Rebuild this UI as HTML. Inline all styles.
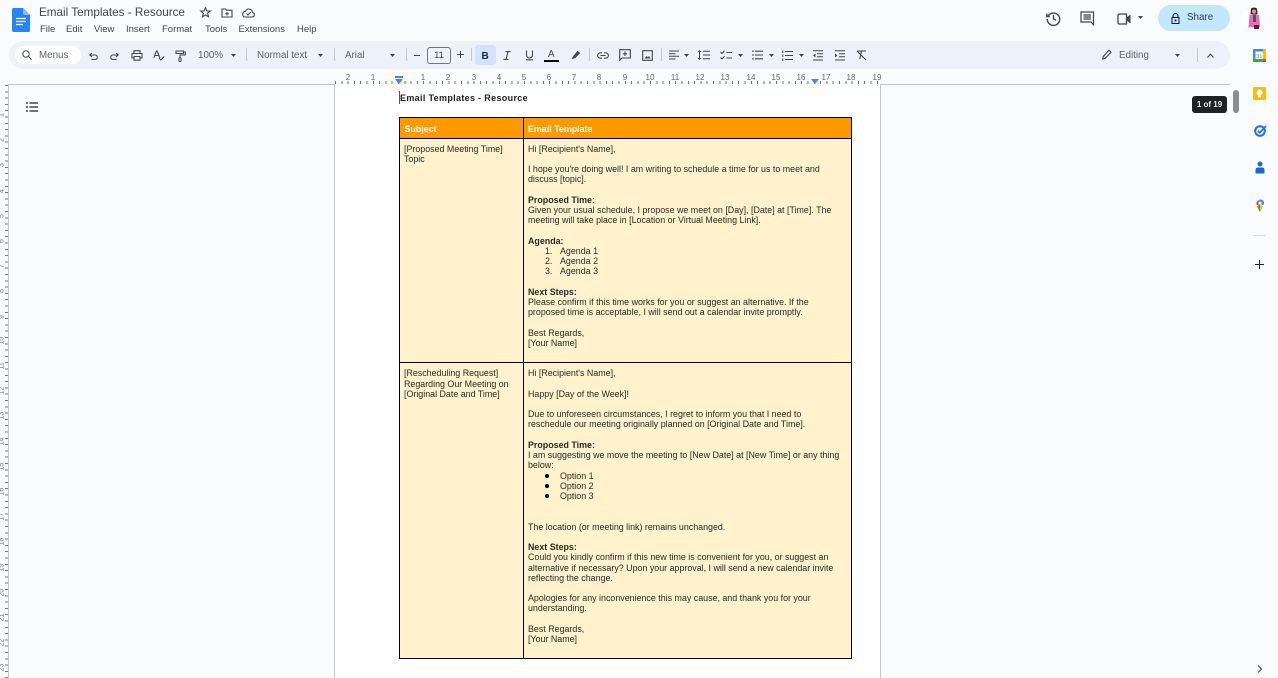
<!DOCTYPE html>
<html><head><meta charset="utf-8"><title>Email Templates - Resource</title>
<style>
html,body{margin:0;padding:0;width:1278px;height:678px;overflow:hidden;background:#f9fbfd;font-family:"Liberation Sans",sans-serif;}
.a{position:absolute;white-space:nowrap;}
.m{position:absolute;top:24px;font-size:9.5px;line-height:12px;color:#444746;white-space:nowrap;}
.t{position:absolute;font-size:9.8px;line-height:12px;color:#5f6368;white-space:nowrap;top:50px;}
.l{position:absolute;font-size:8.9px;line-height:12px;color:#2a2a2a;white-space:nowrap;}
.b{font-weight:bold;}
.r{position:absolute;top:73px;font-size:8px;line-height:10px;color:#666;width:14px;text-align:center;}
.v{position:absolute;left:0;width:5px;font-size:7px;line-height:8px;color:#777;transform:rotate(-90deg);text-align:center;}
svg{position:absolute;overflow:visible;}
.ic{fill:none;stroke:#444746;stroke-width:1.1;}
</style></head><body>

<!-- Header -->
<svg style="left:12px;top:8px" width="18" height="24" viewBox="0 0 18 24"><path d="M1.5 0H11L18 7V22.500Q18 24 16.500 24H1.500Q0 24 0 22.500V1.500Q0 0 1.500 0Z" fill="#2684fc"/><path d="M11 0L18 7H12.500Q11 7 11 5.500Z" fill="#8ab8f8"/><path d="M4 10.500H14M4 13.500H14M4 16.500H11" stroke="#fff" stroke-width="1.300"/></svg>
<div class="a" style="left:39px;top:5px;font-size:11.700px;line-height:16px;color:#444746">Email Templates - Resource</div>
<svg style="left:200px;top:7px" width="11" height="11" viewBox="0 0 11 11"><path class="ic" d="M5.500 .8L6.900 4H10.300L7.600 6.200L8.500 9.800L5.500 7.900L2.500 9.800L3.400 6.200L.7 4H4.100Z"/></svg>
<svg style="left:221px;top:8px" width="12" height="10" viewBox="0 0 12 10"><path class="ic" d="M1 1H4.500L5.500 2.200H11V9H1ZM6 4V7.500M4.300 5.700H7.800"/></svg>
<svg style="left:242px;top:8px" width="13" height="10" viewBox="0 0 13 10"><path class="ic" d="M3.500 9H10Q12.300 9 12.300 6.800Q12.300 5 10.500 4.500Q10 1 6.800 1Q4.300 1 3.400 3.300Q.7 3.700 .7 6.200Q.7 9 3.500 9ZM4.500 5.500L6 7L8.800 4"/></svg>
<div class="m" style="left:40px">File</div>
<div class="m" style="left:66px">Edit</div>
<div class="m" style="left:94px">View</div>
<div class="m" style="left:126px">Insert</div>
<div class="m" style="left:162px">Format</div>
<div class="m" style="left:205px">Tools</div>
<div class="m" style="left:238.500px">Extensions</div>
<div class="m" style="left:297px">Help</div>

<svg style="left:1046px;top:11px" width="15" height="15" viewBox="0 0 15 15"><path d="M2.200 5A6.200 6.200 0 1 1 1.300 8M.8 2.500V5.500H3.800M7.500 4V7.800L10.200 9.300" fill="none" stroke="#444746" stroke-width="1.400"/></svg>
<svg style="left:1080px;top:11px" width="15" height="15" viewBox="0 0 15 15"><path d="M1 1H13.500V13.800L11 11H1ZM3.500 4H11M3.500 6H11M3.500 8H11" fill="none" stroke="#444746" stroke-width="1.200"/></svg>
<svg style="left:1117px;top:13px" width="14" height="12" viewBox="0 0 14 12"><path d="M2.500 1H9.500V11H2.500Q1 11 1 9.500V2.500Q1 1 2.500 1Z" fill="none" stroke="#444746" stroke-width="1.300"/><path d="M9.500 4.500L13.500 1.500V10.500L9.500 7.500Z" fill="#444746"/></svg>
<svg style="left:1138px;top:16px" width="5" height="3"><path d="M0 0H5L2.500 3Z" fill="#444746"/></svg>
<div class="a" style="left:1158px;top:5px;width:72px;height:26px;border-radius:13px;background:#c2e7ff"></div>
<svg style="left:1171px;top:13px" width="9" height="11" viewBox="0 0 9 11"><path d="M2 4.500V3A2.500 2.500 0 0 1 7 3V4.500" fill="none" stroke="#001d35" stroke-width="1.100"/><path fill-rule="evenodd" d="M.5 4H8.500V11H.5ZM1.500 5V10H7.500V5Z" fill="#001d35"/><circle cx="4.500" cy="7.500" r="1" fill="#001d35"/></svg>
<div class="a" style="left:1187px;top:12px;font-size:9.800px;line-height:12px;color:#33414d">Share</div>
<svg style="left:1243px;top:7px" width="22" height="22" viewBox="0 0 22 22"><circle cx="11" cy="11" r="11" fill="#fff"/><path d="M8 1.500Q11 -.5 14 1.500L14.500 7H7.500Z" fill="#3a2020"/><circle cx="11" cy="4.500" r="2" fill="#d8a080"/><path d="M6.500 8L10 6.800H12.500L16 8L17 20H5.500Z" fill="#ee69b0"/><path d="M10 7.500H13V15H10Z" fill="#3a5a70"/><path d="M11 18H16V22H11Z" fill="#3b2a30"/></svg>

<!-- Toolbar -->
<div class="a" style="left:9px;top:41px;width:1221px;height:28px;border-radius:14px;background:#edf2fa"></div>
<div class="a" style="left:15px;top:46px;width:66px;height:18px;border-radius:9px;background:#fff"></div>
<svg style="left:22px;top:50px" width="10" height="10" viewBox="0 0 10 10"><circle cx="4" cy="4" r="3.200" fill="none" stroke="#444746" stroke-width="1"/><path d="M6.500 6.500L9.600 9.600" stroke="#444746" stroke-width="1.100"/></svg>
<div class="t" style="left:39px">Menus</div>
<svg style="left:89px;top:52px" width="9" height="8" viewBox="0 0 9 8"><path class="ic" d="M3 1L.8 3L3 5M1 3H6Q8.300 3 8.300 5.200Q8.300 7.400 6 7.400H2.500"/></svg>
<svg style="left:110px;top:52px" width="9" height="8" viewBox="0 0 9 8"><path class="ic" d="M6 1L8.200 3L6 5M8 3H3Q.7 3 .7 5.200Q.7 7.400 3 7.400H6.500"/></svg>
<svg style="left:131px;top:50px" width="12" height="11" viewBox="0 0 12 11"><path class="ic" d="M3 3V.7H9V3M3 8H1V3.500H11V8H9M3 6.500H9V10.200H3Z"/></svg>
<svg style="left:153px;top:50px" width="12" height="11" viewBox="0 0 12 11"><path class="ic" d="M.8 7.800L3.500 1H4.200L6.800 7.800M1.800 5.500H5.800M6 8L7.800 10L11.200 6.500"/></svg>
<svg style="left:175px;top:50px" width="11" height="12" viewBox="0 0 11 12"><path class="ic" d="M1 1H8.500V3.500H1ZM8.500 2H10.300V5H5V8"/><rect x="4" y="7.800" width="2" height="3.800" rx=".6" fill="none" stroke="#444746" stroke-width="1"/></svg>
<div class="t" style="left:198px">100%</div>
<svg style="left:231px;top:54px" width="5" height="3"><path d="M0 0H5L2.500 3Z" fill="#444746"/></svg>
<div class="a" style="left:246px;top:48px;width:1px;height:13px;background:#c7c7c7"></div>
<div class="t" style="left:257px">Normal text</div>
<svg style="left:318px;top:54px" width="5" height="3"><path d="M0 0H5L2.500 3Z" fill="#444746"/></svg>
<div class="a" style="left:334px;top:48px;width:1px;height:13px;background:#c7c7c7"></div>
<div class="t" style="left:345px">Arial</div>
<svg style="left:390px;top:54px" width="5" height="3"><path d="M0 0H5L2.500 3Z" fill="#444746"/></svg>
<div class="a" style="left:406px;top:48px;width:1px;height:13px;background:#c7c7c7"></div>
<div class="a" style="left:414px;top:55px;width:6px;height:1px;background:#444746"></div>
<div class="a" style="left:427px;top:47px;width:22px;height:15px;border:1px solid #747775;border-radius:3px;text-align:center;font-size:9.500px;line-height:15px;color:#444746">11</div>
<svg style="left:457px;top:51px" width="7" height="7"><path d="M3.500 0V7M0 3.500H7" stroke="#444746" stroke-width="1"/></svg>
<div class="a" style="left:471px;top:48px;width:1px;height:13px;background:#c7c7c7"></div>
<div class="a" style="left:475px;top:45px;width:21px;height:20px;border-radius:3px;background:#d3e3fd"></div>
<div class="a" style="left:481.500px;top:50px;font-size:10px;line-height:13px;font-weight:bold;color:#0b2a55">B</div>
<svg style="left:503px;top:51px" width="8" height="9" viewBox="0 0 8 9"><path d="M2.500 .6H7.500M.5 8.400H5.500M5 .6L3 8.400" fill="none" stroke="#444746" stroke-width="1.100"/></svg>
<svg style="left:525px;top:50px" width="9" height="11" viewBox="0 0 9 11"><path d="M1.500 .5V5A3 3 0 0 0 7.500 5V.5M.8 9.800H8.200" fill="none" stroke="#444746" stroke-width="1.100"/></svg>
<div class="a" style="left:548px;top:49px;font-size:9.800px;line-height:12px;color:#444746">A</div>
<div class="a" style="left:544px;top:60px;width:15px;height:2px;background:#000"></div>
<svg style="left:570px;top:50px" width="11" height="10" viewBox="0 0 11 10"><path d="M1.500 9L3 6.500L7.500 .8L10.200 3L5.500 8L3.200 8.800Z" fill="#444746"/></svg>
<div class="a" style="left:589px;top:48px;width:1px;height:13px;background:#c7c7c7"></div>
<svg style="left:597px;top:52px" width="12" height="7" viewBox="0 0 12 7"><path class="ic" d="M5 .8H3.300A2.700 2.700 0 0 0 3.300 6.200H5M7 .8H8.700A2.700 2.700 0 0 1 8.700 6.200H7M3.500 3.500H8.500"/></svg>
<svg style="left:619px;top:49px" width="12" height="12" viewBox="0 0 12 12"><path class="ic" d="M.7 .7H11.300V9H3L.7 11.300ZM6 2.500V7M3.800 4.800H8.200"/></svg>
<svg style="left:642px;top:50px" width="11" height="11" viewBox="0 0 11 11"><path class="ic" d="M.7 .7H10.300V10.300H.7Z"/><path d="M2.500 8.500L4.500 6L5.800 7.300L7 6L8.500 8.500Z" fill="#444746"/></svg>
<div class="a" style="left:661px;top:48px;width:1px;height:13px;background:#c7c7c7"></div>
<svg style="left:669px;top:50px" width="10" height="10" viewBox="0 0 10 10"><path d="M0 1H10M0 3.700H6.500M0 6.300H10M0 9H6.500" stroke="#444746" stroke-width="1"/></svg>
<svg style="left:684px;top:54px" width="5" height="3"><path d="M0 0H5L2.500 3Z" fill="#444746"/></svg>
<svg style="left:697px;top:50px" width="13" height="10" viewBox="0 0 13 10"><path d="M2.500 0L4.500 2H.5ZM2.500 10L4.500 8H.5Z" fill="#444746"/><path d="M2.500 1V9M6 1.200H13M6 5H13M6 8.800H13" stroke="#444746" stroke-width="1"/></svg>
<svg style="left:720px;top:50px" width="12" height="10" viewBox="0 0 12 10"><path class="ic" d="M.5 2L2 3.500L4.500 .7M.5 7.500L2 9L4.500 6.200M6.500 2.500H12M6.500 8H12"/></svg>
<svg style="left:738px;top:54px" width="5" height="3"><path d="M0 0H5L2.500 3Z" fill="#444746"/></svg>
<svg style="left:752px;top:50px" width="11" height="10" viewBox="0 0 11 10"><path d="M3 1.200H11M3 5H11M3 8.800H11M0 1.200H1.800M0 5H1.800M0 8.800H1.800" stroke="#444746" stroke-width="1.100"/></svg>
<svg style="left:769px;top:54px" width="5" height="3"><path d="M0 0H5L2.500 3Z" fill="#444746"/></svg>
<svg style="left:782px;top:50px" width="11" height="11" viewBox="0 0 11 11"><path d="M3 1.500H11M3 5.500H11M3 9.500H11M.8 .5V3M.8 4.500V7M.8 8.500V11" stroke="#444746" stroke-width="1"/></svg>
<svg style="left:799px;top:54px" width="5" height="3"><path d="M0 0H5L2.500 3Z" fill="#444746"/></svg>
<svg style="left:813px;top:50px" width="10" height="11" viewBox="0 0 10 11"><path d="M0 .7H10M4 3.700H10M4 6.700H10M0 10H10" stroke="#444746" stroke-width="1"/><path d="M2.500 3.500V7.500L0 5.500Z" fill="#444746"/></svg>
<svg style="left:835px;top:50px" width="10" height="11" viewBox="0 0 10 11"><path d="M0 .7H10M4 3.700H10M4 6.700H10M0 10H10" stroke="#444746" stroke-width="1"/><path d="M0 3.500V7.500L2.500 5.500Z" fill="#444746"/></svg>
<svg style="left:856px;top:50px" width="11" height="10" viewBox="0 0 11 10"><path d="M1 1H10M5.500 1L3.800 9M1 1L10 10" fill="none" stroke="#444746" stroke-width="1.100"/></svg>

<svg style="left:1102px;top:49px" width="10" height="11" viewBox="0 0 10 11"><path class="ic" d="M.8 10L1.200 7.500L7 1.200L9 3.200L3 9.500Z"/></svg>
<div class="t" style="left:1119px">Editing</div>
<svg style="left:1175px;top:54px" width="5" height="3"><path d="M0 0H5L2.500 3Z" fill="#444746"/></svg>
<div class="a" style="left:1197px;top:48px;width:1px;height:14px;background:#c7c7c7"></div>
<svg style="left:1207px;top:53px" width="7" height="5" viewBox="0 0 7 5"><path d="M.5 4.500L3.500 1.200L6.500 4.500" fill="none" stroke="#444746" stroke-width="1.100"/></svg>

<!-- Horizontal ruler -->
<div class="a" style="left:335px;top:81px;width:546px;height:3px;background:repeating-linear-gradient(90deg,#777 0,#777 1px,transparent 1px,transparent 6.300px)"></div>
<div class="a" style="left:8px;top:84px;width:1222px;height:1px;background:#c4c7c5"></div>
<div class="r" style="left:341px">2</div><div class="r" style="left:366px">1</div><div class="r" style="left:416px">1</div><div class="r" style="left:441px">2</div><div class="r" style="left:467px">3</div><div class="r" style="left:492px">4</div><div class="r" style="left:517px">5</div><div class="r" style="left:542px">6</div><div class="r" style="left:567px">7</div><div class="r" style="left:592px">8</div><div class="r" style="left:618px">9</div><div class="r" style="left:643px">10</div><div class="r" style="left:668px">11</div><div class="r" style="left:693px">12</div><div class="r" style="left:718px">13</div><div class="r" style="left:744px">14</div><div class="r" style="left:769px">15</div><div class="r" style="left:794px">16</div><div class="r" style="left:819px">17</div><div class="r" style="left:844px">18</div><div class="r" style="left:870px">19</div>
<svg style="left:395px;top:76px" width="8" height="8"><path d="M0 0H8V2H0Z" fill="#4285f4"/><path d="M0 3H8L4 8Z" fill="#4285f4"/></svg>
<svg style="left:811px;top:79px" width="8" height="5"><path d="M0 0H8L4 5Z" fill="#4285f4"/></svg>

<!-- Vertical ruler -->
<div class="a" style="left:5px;top:85px;width:3px;height:593px;background:repeating-linear-gradient(180deg,#777 0,#777 1px,transparent 1px,transparent 6.300px)"></div>
<div class="a" style="left:8px;top:85px;width:1px;height:593px;background:#c4c7c5"></div>
<div class="v" style="top:111px">1</div><div class="v" style="top:136px">2</div><div class="v" style="top:161px">3</div><div class="v" style="top:187px">4</div><div class="v" style="top:212px">5</div><div class="v" style="top:237px">6</div><div class="v" style="top:262px">7</div><div class="v" style="top:287px">8</div><div class="v" style="top:313px">9</div><div class="v" style="top:338px">10</div><div class="v" style="top:363px">11</div><div class="v" style="top:388px">12</div><div class="v" style="top:413px">13</div><div class="v" style="top:439px">14</div><div class="v" style="top:464px">15</div><div class="v" style="top:489px">16</div><div class="v" style="top:514px">17</div><div class="v" style="top:539px">18</div><div class="v" style="top:565px">19</div><div class="v" style="top:590px">20</div><div class="v" style="top:615px">21</div><div class="v" style="top:640px">22</div><div class="v" style="top:665px">23</div>

<svg style="left:26px;top:102px" width="12" height="10" viewBox="0 0 12 10"><path d="M0 1H2M3.500 1H12M0 5H2M3.500 5H12M0 9H2M3.500 9H12" stroke="#444746" stroke-width="1.400"/></svg>

<!-- Page -->
<div class="a" style="left:334px;top:84px;width:545px;height:594px;background:#fff;border-left:1px solid #c7c7c7;border-right:1px solid #c7c7c7"></div>
<div class="a" style="left:399px;top:91px;width:1px;height:13px;background:#555"></div>
<div class="l b" style="left:400px;top:92px;color:#222;font-size:9px;letter-spacing:.33px">Email Templates - Resource</div>

<!-- Table -->
<div class="a" style="left:399px;top:117px;width:451px;height:540px;background:#fff2cc;border:1px solid #000"></div>
<div class="a" style="left:400px;top:118px;width:451px;height:20px;background:#ff9900"></div>
<div class="a" style="left:400px;top:138px;width:451px;height:1px;background:#000"></div>
<div class="a" style="left:400px;top:362px;width:451px;height:1px;background:#000"></div>
<div class="a" style="left:523px;top:118px;width:1px;height:540px;background:#000"></div>

<div class="l b" style="left:404.500px;top:123px;color:#fff">Subject</div>
<div class="l b" style="left:528px;top:123px;color:#fff">Email Template</div>

<div class="l" style="left:404px;top:143px">[Proposed Meeting Time]</div>
<div class="l" style="left:404px;top:153px">Topic</div>
<div class="l" style="left:404px;top:367px">[Rescheduling Request]</div>
<div class="l" style="left:404px;top:378px">Regarding Our Meeting on</div>
<div class="l" style="left:404px;top:388px">[Original Date and Time]</div>

<div class="l" style="left:528px;top:143px">Hi [Recipient's Name],</div>
<div class="l" style="left:528px;top:163px">I hope you're doing well! I am writing to schedule a time for us to meet and</div>
<div class="l" style="left:528px;top:173px">discuss [topic].</div>
<div class="l b" style="left:528px;top:194px">Proposed Time:</div>
<div class="l" style="left:528px;top:204px">Given your usual schedule, I propose we meet on [Day], [Date] at [Time]. The</div>
<div class="l" style="left:528px;top:214px">meeting will take place in [Location or Virtual Meeting Link].</div>
<div class="l b" style="left:528px;top:235px">Agenda:</div>
<div class="l" style="left:545px;top:245px">1.</div><div class="l" style="left:560px;top:245px">Agenda 1</div>
<div class="l" style="left:545px;top:255px">2.</div><div class="l" style="left:560px;top:255px">Agenda 2</div>
<div class="l" style="left:545px;top:265px">3.</div><div class="l" style="left:560px;top:265px">Agenda 3</div>
<div class="l b" style="left:528px;top:286px">Next Steps:</div>
<div class="l" style="left:528px;top:296px">Please confirm if this time works for you or suggest an alternative. If the</div>
<div class="l" style="left:528px;top:306px">proposed time is acceptable, I will send out a calendar invite promptly.</div>
<div class="l" style="left:528px;top:327px">Best Regards,</div>
<div class="l" style="left:528px;top:337px">[Your Name]</div>

<div class="l" style="left:528px;top:367px">Hi [Recipient's Name],</div>
<div class="l" style="left:528px;top:388px">Happy [Day of the Week]!</div>
<div class="l" style="left:528px;top:408px">Due to unforeseen circumstances, I regret to inform you that I need to</div>
<div class="l" style="left:528px;top:418px">reschedule our meeting originally planned on [Original Date and Time].</div>
<div class="l b" style="left:528px;top:439px">Proposed Time:</div>
<div class="l" style="left:528px;top:449px">I am suggesting we move the meeting to [New Date] at [New Time] or any thing</div>
<div class="l" style="left:528px;top:459px">below:</div>
<div class="a" style="left:545px;top:474px;width:4px;height:4px;border-radius:2px;background:#000"></div><div class="l" style="left:560px;top:470px">Option 1</div>
<div class="a" style="left:545px;top:484px;width:4px;height:4px;border-radius:2px;background:#000"></div><div class="l" style="left:560px;top:480px">Option 2</div>
<div class="a" style="left:545px;top:494px;width:4px;height:4px;border-radius:2px;background:#000"></div><div class="l" style="left:560px;top:490px">Option 3</div>
<div class="l" style="left:528px;top:521px">The location (or meeting link) remains unchanged.</div>
<div class="l b" style="left:528px;top:541px">Next Steps:</div>
<div class="l" style="left:528px;top:551px">Could you kindly confirm if this new time is convenient for you, or suggest an</div>
<div class="l" style="left:528px;top:562px">alternative if necessary? Upon your approval, I will send a new calendar invite</div>
<div class="l" style="left:528px;top:572px">reflecting the change.</div>
<div class="l" style="left:528px;top:592px">Apologies for any inconvenience this may cause, and thank you for your</div>
<div class="l" style="left:528px;top:602px">understanding.</div>
<div class="l" style="left:528px;top:623px">Best Regards,</div>
<div class="l" style="left:528px;top:633px">[Your Name]</div>

<!-- Scroll + tooltip -->
<div class="a" style="left:1233px;top:90px;width:6px;height:23px;border-radius:3px;background:#8a8e93"></div>
<div class="a" style="left:1192px;top:96px;width:35px;height:17px;border-radius:3px;background:#202124;color:#e8eaed;font-size:8px;font-weight:bold;line-height:17px;text-align:center">1 of 19</div>

<!-- Side panel -->
<svg style="left:1253px;top:49px" width="13" height="13" viewBox="0 0 13 13"><rect width="13" height="13" rx="1" fill="#4285f4"/><rect x="10" width="3" height="10" fill="#fbbc04"/><rect y="10" width="10" height="3" fill="#34a853"/><rect x="10" y="10" width="3" height="3" fill="#ea4335"/><rect x="2.500" y="2.500" width="7.500" height="7.500" fill="#fff"/><text x="3.300" y="8.800" font-size="5.500" fill="#4285f4" font-family="Liberation Sans">31</text></svg>
<svg style="left:1253px;top:87px" width="13" height="13" viewBox="0 0 13 13"><rect width="13" height="13" rx="1.500" fill="#fbbc04"/><circle cx="6.500" cy="5.500" r="3" fill="#fff"/><rect x="5" y="8.500" width="3" height="1.800" fill="#fff"/></svg>
<svg style="left:1254px;top:124px" width="13" height="13" viewBox="0 0 13 13"><circle cx="6" cy="7" r="4.800" fill="none" stroke="#1a73e8" stroke-width="2"/><path d="M3.800 6.800L5.800 8.800L12 2" fill="none" stroke="#1a73e8" stroke-width="1.700"/></svg>
<svg style="left:1255px;top:161px" width="10" height="13" viewBox="0 0 10 13"><circle cx="5" cy="3" r="2.500" fill="#1a67d2"/><path d="M.5 12.500V9Q.5 6.500 3 6.500H7Q9.500 6.500 9.500 9V12.500Z" fill="#1a67d2"/></svg>
<svg style="left:1256px;top:199px" width="8" height="13" viewBox="0 0 8 13"><path d="M4 13L1 7.500L4 5Z" fill="#34a853"/><path d="M4 13L7 7.500L4 5Z" fill="#fbbc04"/><path d="M.8 6.500A4 4 0 0 1 2 1.500L4 5Z" fill="#ea4335"/><path d="M2 1.500A4 4 0 0 1 7 1.500L4 5Z" fill="#4285f4"/><path d="M7 1.500A4 4 0 0 1 7.500 6L4 5Z" fill="#4285f4"/><circle cx="4" cy="4" r="1.500" fill="#fff"/></svg>
<div class="a" style="left:1253px;top:235px;width:13px;height:1px;background:#dadce0"></div>
<svg style="left:1255px;top:260px" width="9" height="9"><path d="M4.500 0V9M0 4.500H9" stroke="#1f1f1f" stroke-width="1"/></svg>
<svg style="left:1257px;top:665px" width="6" height="8" viewBox="0 0 6 8"><path d="M1 .5L4.500 4L1 7.500" fill="none" stroke="#444746" stroke-width="1.100"/></svg>
</body></html>
